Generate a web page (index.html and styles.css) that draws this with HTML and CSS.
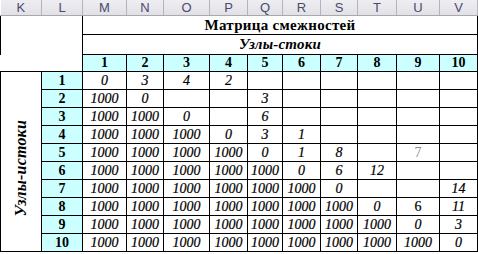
FILE: index.html
```html
<!DOCTYPE html>
<html>
<head>
<meta charset="utf-8">
<link rel="stylesheet" href="styles.css">
</head>
<body>
<table class="sheet">
  <colgroup>
    <col class="w41"><col class="w41"><col class="w44"><col class="w37"><col class="w46"><col class="w38">
    <col class="w35"><col class="w38"><col class="w37"><col class="w39"><col class="w43"><col class="w38">
  </colgroup>
  <tr class="r-hdr">
    <th>K</th><th>L</th><th>M</th><th>N</th><th>O</th><th>P</th><th>Q</th><th>R</th><th>S</th><th>T</th><th>U</th><th>V</th>
  </tr>
  <tr class="r-title">
    <td class="corner" colspan="2" rowspan="2"></td>
    <td class="title" colspan="10">Матрица смежностей</td>
  </tr>
  <tr class="r-sub">
    <td class="subtitle" colspan="10">Узлы-стоки</td>
  </tr>
  <tr class="r-nums">
    <td class="blank"></td><td class="blank"></td>
    <td class="num">1</td><td class="num">2</td><td class="num">3</td><td class="num">4</td><td class="num">5</td>
    <td class="num">6</td><td class="num">7</td><td class="num">8</td><td class="num">9</td><td class="num">10</td>
  </tr>
  <tr class="r-body">
    <td class="side" rowspan="10"><span class="vert">Узлы-истоки</span></td>
    <td class="num">1</td><td>0</td><td>3</td><td>4</td><td>2</td><td></td><td></td><td></td><td></td><td></td><td></td>
  </tr>
  <tr class="r-body">
    <td class="num">2</td><td>1000</td><td>0</td><td></td><td></td><td>3</td><td></td><td></td><td></td><td></td><td></td>
  </tr>
  <tr class="r-body">
    <td class="num">3</td><td>1000</td><td>1000</td><td>0</td><td></td><td>6</td><td></td><td></td><td></td><td></td><td></td>
  </tr>
  <tr class="r-body">
    <td class="num">4</td><td>1000</td><td>1000</td><td>1000</td><td>0</td><td>3</td><td>1</td><td></td><td></td><td></td><td></td>
  </tr>
  <tr class="r-body">
    <td class="num">5</td><td>1000</td><td>1000</td><td>1000</td><td>1000</td><td>0</td><td>1</td><td>8</td><td></td><td class="dim">7</td><td></td>
  </tr>
  <tr class="r-body">
    <td class="num">6</td><td>1000</td><td>1000</td><td>1000</td><td>1000</td><td>1000</td><td>0</td><td>6</td><td>12</td><td></td><td></td>
  </tr>
  <tr class="r-body">
    <td class="num">7</td><td>1000</td><td>1000</td><td>1000</td><td>1000</td><td>1000</td><td>1000</td><td>0</td><td></td><td></td><td>14</td>
  </tr>
  <tr class="r-body">
    <td class="num">8</td><td>1000</td><td>1000</td><td>1000</td><td>1000</td><td>1000</td><td>1000</td><td>1000</td><td>0</td><td class="up">6</td><td>11</td>
  </tr>
  <tr class="r-body">
    <td class="num">9</td><td>1000</td><td>1000</td><td>1000</td><td>1000</td><td>1000</td><td>1000</td><td>1000</td><td>1000</td><td>0</td><td>3</td>
  </tr>
  <tr class="r-body">
    <td class="num">10</td><td>1000</td><td>1000</td><td>1000</td><td>1000</td><td>1000</td><td>1000</td><td>1000</td><td>1000</td><td>1000</td><td>0</td>
  </tr>
</table>
</body>
</html>
```

FILE: styles.css
```css
html, body {
  margin: 0;
  padding: 0;
  background: #ffffff;
}

.sheet {
  border-collapse: collapse;
  table-layout: fixed;
  width: 478px;
  font-family: "Liberation Serif", "DejaVu Serif", serif;
  font-size: 14px;
  color: #000;
}

.w35 { width: 35px; }
.w37 { width: 37px; }
.w38 { width: 38px; }
.w39 { width: 39px; }
.w41 { width: 41px; }
.w43 { width: 43px; }
.w44 { width: 44px; }
.w46 { width: 46px; }

.sheet th,
.sheet td {
  padding: 0;
  text-align: center;
  vertical-align: middle;
  white-space: nowrap;
  overflow: hidden;
  line-height: 1;
  font-family: "Liberation Serif", "DejaVu Serif", serif;
}

.r-hdr th {
  height: 15px;
  background: linear-gradient(#eeeef2, #e0e0e6);
  border-right: 1px solid #b4b4bc;
  border-bottom: 1px solid #a8a8b0;
  font-family: "Liberation Sans", Arial, sans-serif;
  font-size: 13px;
  font-weight: normal;
  color: #4a4a6c;
}

.r-title td { height: 18px; }
.r-sub td { height: 19px; }
.r-nums td { height: 16px; }
.r-body td { height: 17px; }

.corner {
  border-left: 1px solid #000;
  border-right: 1px solid #000;
}

.title {
  border-right: 1px solid #000;
  border-bottom: 1px solid #000;
  font-weight: bold;
  font-size: 15px;
  letter-spacing: 0.3px;
}

.subtitle {
  border-right: 1px solid #000;
  border-bottom: 1px solid #000;
  font-weight: bold;
  font-style: italic;
  font-size: 15px;
  letter-spacing: 0.2px;
}

.blank {
  border: none;
}

.r-nums .blank + .blank {
  border-right: 1px solid #000;
}

.num {
  background: #ccffff;
  border: 1px solid #000;
  font-weight: bold;
  font-style: normal;
}

.r-body td {
  border: 1px solid #000;
  font-style: italic;
  -webkit-text-stroke: 0.2px #000;
}

.r-body td.num {
  font-style: normal;
  -webkit-text-stroke: 0;
}

.r-body td.side {
  border: 1px solid #000;
  font-style: italic;
  padding-top: 16px;
  -webkit-text-stroke: 0;
}

.vert {
  display: inline-block;
  writing-mode: vertical-rl;
  transform: rotate(180deg);
  font-weight: bold;
  font-style: italic;
  font-size: 16px;
  letter-spacing: 0.2px;
}

.r-body td.dim {
  color: #8c8c8c;
  font-style: normal;
  -webkit-text-stroke: 0;
}

.r-body td.up {
  font-style: normal;
}
```
